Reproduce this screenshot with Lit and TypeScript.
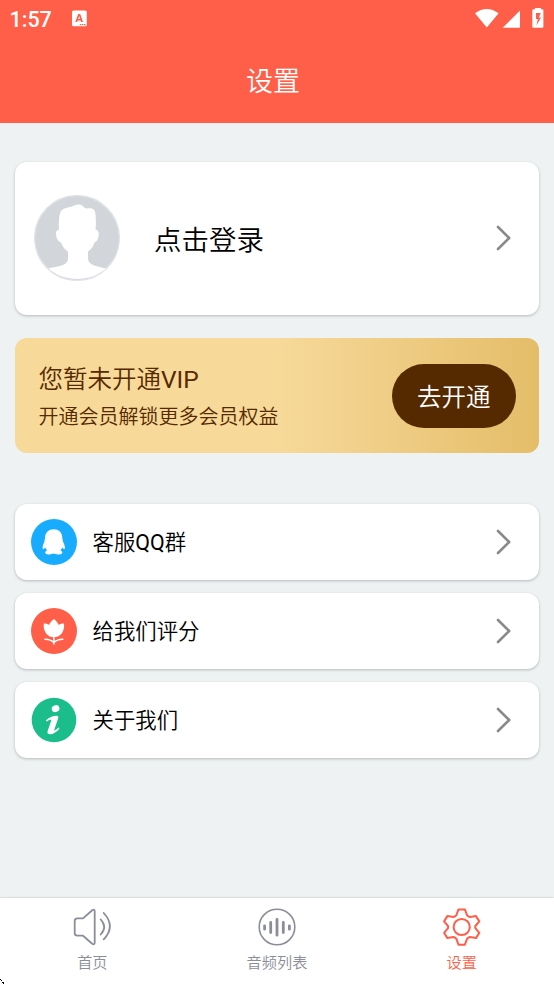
import { LitElement, html, css, svg } from "lit";
import { customElement, property } from "lit/decorators.js";
import { classMap } from "lit/directives/class-map.js";

const chevron = svg`<svg class="chevron" width="18" height="28" viewBox="0 0 18 28">
  <path d="M3 3L14.2 14L3 25" fill="none" stroke="#8a8a8a" stroke-width="2.6" stroke-linecap="round" stroke-linejoin="round"/>
</svg>`;

const qqIcon = svg`<svg width="46" height="46" viewBox="0 0 46 46">
  <circle cx="23" cy="23" r="23" fill="#18acff"/>
  <path fill="#fff" d="M22.7 10.2c-4.900 0-8.600 3.400-8.600 8.300 0 .8-.1 1.400-.4 2-.2.5-.2 1-.1 1.500-.9 2.100-2.100 4.800-2 7 0 .9.5 1.400 1.200 1 .6-.3 1-.9 1.500-1.400.4 1.100 1 2 1.800 2.800-1 .4-1.900 1.100-1.900 2 0 1.200 1.300 1.900 3.200 2 2 .2 4.100-.2 5.300-.8 1.300.6 3.400 1 5.400.8 1.900-.1 3.200-.8 3.200-2 0-.9-.8-1.600-1.900-2 .8-.8 1.400-1.700 1.800-2.800.5.5.9 1.100 1.500 1.400.7.4 1.200-.1 1.200-1 .1-2.200-1.100-4.900-2.200-7 .1-.5.1-1-.1-1.500-.3-.6-.3-1.200-.3-2 0-4.900-3.600-8.300-8.600-8.300z"/>
</svg>`;

const rateIcon = svg`<svg width="46" height="46" viewBox="0 0 46 46">
  <circle cx="23" cy="23" r="23" fill="#ff5f49"/>
  <path fill="#fff" d="M12.900 15.500c2-.1 3.800.4 5.200 1.500 1-2.200 2.600-4.300 4.800-6 2.200 1.700 3.800 3.800 4.800 6 1.400-1.100 3.200-1.600 5.200-1.500.5 2.200.2 5.500-1.100 8.100-1.600 3.300-4.300 5.700-8.900 5.700s-7.300-2.400-8.900-5.700c-1.300-2.600-1.600-5.900-1.100-8.100z"/>
  <path d="M22.900 28v8M14 31.200c3.500.1 6.600 1 8.900 3.300 2.300-2.300 5.400-3.200 8.900-3.300" fill="none" stroke="#fff" stroke-width="1.500" stroke-linecap="round"/>
</svg>`;

const infoIcon = svg`<svg width="46" height="46" viewBox="0 0 46 46">
  <circle cx="23" cy="23" r="22.300" fill="#1bbe8b"/>
  <ellipse cx="24.600" cy="11.600" rx="3.900" ry="3.400" fill="#fff" transform="rotate(-20 24.600 11.600)"/>
  <path fill="#fff" d="M15 23.500c3.500-3.600 7.700-5 10.700-4.700 1.500.2 1.900 1.100 1.400 2.700l-3.800 11.300c-.3.800.2.9.9.5 1.100-.6 2.300-1.600 3.500-2.700.6.3.8.8.4 1.300-2.600 3.200-6 5.200-9.100 5.300-2.300.1-3-1.300-2.300-3.400l3.400-9.900c.3-.9-.1-1.300-1-1.100-1 .2-1.900.8-3 1.600-.7 0-1.200-.3-1.100-.9z"/>
</svg>`;

const avatar = svg`<svg width="86" height="86" viewBox="0 0 86 86">
  <circle cx="43" cy="43" r="42.400" fill="#d2d6db" stroke="#e1e3e9" stroke-width="1.300"/>
  <path fill="#fff" d="M14.500 73.500C21 71.500 34 71.500 34 63.500V56.500C29.500 53.500 28.500 51 27 47.500C23 46 22 41.500 22 38C22 36 23 35 25 35C24.500 29 25 21 26.500 17C29 12 35 13 39 11C43 9.500 46 9 48 10.500C50 12 50.500 13.500 53 13.500C59 12.500 61.500 15 61.500 20C62 25 62 30 61.500 34.500C64 35 65 37 64.700 40C64.300 44 63 46.500 60.500 47.500C59.500 51 57.500 54 54 56.500V63.500C54 70.500 64 71.500 72 73.500C56 87.500 30.500 87.500 14.500 73.500Z"/>
</svg>`;

const speakerIcon = svg`<svg width="38" height="38" viewBox="0 0 38 38" fill="none" stroke="#8b8e98" stroke-width="1.800" stroke-linecap="round" stroke-linejoin="round">
  <path d="M1.700 13Q1.700 10.400 4.300 10.400H10L19.200 2.300Q21.700.7 21.700 3.400V34.600Q21.700 37.300 19.200 35.700L10 27.700H4.300Q1.700 27.700 1.700 25.100Z"/>
  <path d="M27.700 11.500Q34.700 19 27.700 26.500M30.700 5Q43.100 18.200 30.700 31.300"/>
</svg>`;

const waveIcon = svg`<svg width="38" height="38" viewBox="0 0 38 38" fill="none" stroke="#8b8e98" stroke-linecap="round">
  <circle cx="19" cy="19" r="17.800" stroke-width="1.600"/>
  <path stroke-width="2.800" d="M6.600 17.800V21.200M12.700 14.500V24.500M19 11.300V27.200M25.300 14.500V24.500M31.400 17.800V21.200"/>
</svg>`;

const gearIcon = svg`<svg width="38" height="38" viewBox="0 0 38 38" fill="none" stroke="#ff5f49" stroke-width="2" stroke-linejoin="round">
  <circle cx="18.700" cy="19" r="8.100"/>
  <path transform="translate(-.3 0)" d="M15.800 1.400H22.200L24.400 7.400Q25.600 8.600 27.200 9L33.300 8.100L36.600 13.400L32.700 18Q32.300 19 32.700 20.100L36.600 24.800L33.300 30.100L27.200 29.100Q25.600 29.400 24.400 30.700L22.200 36.700H15.800L13.600 30.700Q12.400 29.400 10.800 29.100L4.700 30.100L1.400 24.800L5.300 20.100Q5.700 19 5.300 18L1.400 13.400L4.700 8.100L10.800 9Q12.400 8.600 13.600 7.400Z"/>
</svg>`;

@customElement("status-bar")
export class StatusBar extends LitElement {
  static styles = css`
    :host { display: flex; height: 38px; align-items: center; color: #fff; }
    .time { flex: none; padding: 2px 0 0 9.500px; width: 71px; font: 500 21.500px/38px Roboto, sans-serif; box-sizing: border-box; }
    .signals { margin-left: auto; display: block; }
    svg { display: block; }
  `;
  render() {
    return html`
      <span class="time">1:57</span>
      <svg width="16" height="38" viewBox="0 0 16 38">
        <rect x="1" y="10.500" width="14.800" height="15.800" rx="1.500" fill="#fff"/>
        <path fill="#ff5f49" fill-rule="evenodd" d="M4.300 22L7.200 14H9.200L12 22H10.100L9.700 20.600H6.700L6.200 22ZM7.200 19H9.200L8.200 15.900Z"/>
        <path d="M8.800 24.600H14.500" stroke="#ff5f49" stroke-width="1.300" stroke-dasharray="1.400 .7"/>
      </svg>
      <svg class="signals" width="79" height="38" viewBox="475 0 79 38" fill="#fff">
        <path d="M474.900 13.200Q486.500 4.600 498.600 13.200L486.800 27.500Z"/>
        <path d="M520 10.500V27.800H502.700Z"/>
        <path fill-rule="evenodd" d="M535 9.300V8H541V9.300H542.200Q543.400 9.300 543.400 10.500V26.600Q543.400 27.800 542.200 27.800H533.500Q532.300 27.800 532.300 26.600V10.500Q532.300 9.300 533.500 9.300ZM536 13V19H537.800L536.500 25.500L541 17.500H538.900L540.700 13Z"/>
      </svg>
    `;
  }
}

@customElement("menu-row")
export class MenuRow extends LitElement {
  @property({ attribute: false }) label: unknown;
  @property({ attribute: false }) icon: unknown;
  static styles = css`
    :host { display: flex; align-items: center; height: 76.500px; padding: 0 26px 0 15.500px; background: #fff;
      border-radius: 12px; box-shadow: 0 1px 3px rgba(0, 0, 0, .24); box-sizing: border-box; }
    svg { display: block; }
    .label { flex: 1; margin-left: 16px; padding-top: 2px; font-size: 21.400px; line-height: 32px; color: #000; }
    .latin { font-weight: 400; }
  `;
  render() {
    return html`${this.icon}<span class="label">${this.label}</span>${chevron}`;
  }
}

@customElement("app-root")
export class AppRoot extends LitElement {
  static styles = css`
    :host { display: flex; flex-direction: column; height: 984px; background: #eef2f3; position: relative; overflow: hidden;
      font-family: Roboto, "Noto Sans CJK SC", sans-serif; font-weight: 350; }
    svg { display: block; }
    .latin { font-weight: 400; }
    .header { height: 123px; background: #ff5f49; color: #fff; }
    .title { text-align: center; font-size: 27px; line-height: 40px; padding: 24px 8px 0 0; }
    .content { flex: 1; padding: 38.500px 15.500px 0 15px; display: flex; flex-direction: column; }
    .login { height: 153.500px; box-sizing: border-box; display: flex; align-items: center; padding: 0 26px 0 19px;
      background: #fff; border-radius: 12px; box-shadow: 0 1px 3px rgba(0, 0, 0, .24); }
    .login-label { flex: 1; margin-left: 34px; font-size: 27.500px; line-height: 40px; padding-top: 5px; color: #000; }
    .vip { margin-top: 23px; height: 114.500px; box-sizing: border-box; display: flex; align-items: center; justify-content: space-between;
      padding: 1px 23px 0 23.500px; border-radius: 12px; color: #552a00;
      background: linear-gradient(90deg, #f7d999 0%, #f7d999 50%, #f0cf89 68%, #e4bd68 100%); }
    .vip-title { font-size: 24.500px; line-height: 36px; padding-top: 3px; }
    .vip-note { font-size: 20px; line-height: 30px; margin-top: 4px; }
    .open { border: 0; padding: 3px 0 0; width: 123.500px; height: 64px; border-radius: 32px; background: #552a00; color: #fff;
      font-family: inherit; font-weight: inherit; font-size: 24.500px; line-height: 61px; }
    .menu { margin-top: 51px; display: grid; gap: 12.700px; }
    .tabs { display: grid; grid-template-columns: repeat(3, 1fr); height: 86px; background: #fff; box-shadow: 0 0 2px rgba(0, 0, 0, .25); }
    .tab { display: flex; flex-direction: column; align-items: center; padding-top: 10px; font-size: 15.200px; line-height: 22px;
      gap: 6px; color: #8b8e98; }
    .active { color: #ff5f49; }
    .pointer { position: absolute; left: 0; bottom: 0; }
  `;
  render() {
    const rows = [
      { label: html`客服<span class="latin">QQ</span>群`, icon: qqIcon },
      { label: "给我们评分", icon: rateIcon },
      { label: "关于我们", icon: infoIcon },
    ];
    const tabs = [
      { label: "首页", icon: speakerIcon, active: false },
      { label: "音频列表", icon: waveIcon, active: false },
      { label: "设置", icon: gearIcon, active: true },
    ];
    return html`
      <header class="header">
        <status-bar></status-bar>
        <div class="title">设置</div>
      </header>
      <main class="content">
        <section class="login">${avatar}<span class="login-label">点击登录</span>${chevron}</section>
        <section class="vip">
          <div>
            <div class="vip-title">您暂未开通<span class="latin">VIP</span></div>
            <div class="vip-note">开通会员解锁更多会员权益</div>
          </div>
          <button class="open">去开通</button>
        </section>
        <section class="menu">
          ${rows.map((r) => html`<menu-row .label=${r.label} .icon=${r.icon}></menu-row>`)}
        </section>
      </main>
      <nav class="tabs">
        ${tabs.map((t) => html`<div class=${classMap({ tab: true, active: t.active })}>${t.icon}<span>${t.label}</span></div>`)}
      </nav>
      <svg class="pointer" width="5" height="5" viewBox="0 0 5 5" fill="#000" shape-rendering="crispEdges">
        <path d="M0 0h1v1h-1zM1 1h1v1h-1zM2 3h2v1h-2zM3 4h1v1h-1z"/>
      </svg>
    `;
  }
}
